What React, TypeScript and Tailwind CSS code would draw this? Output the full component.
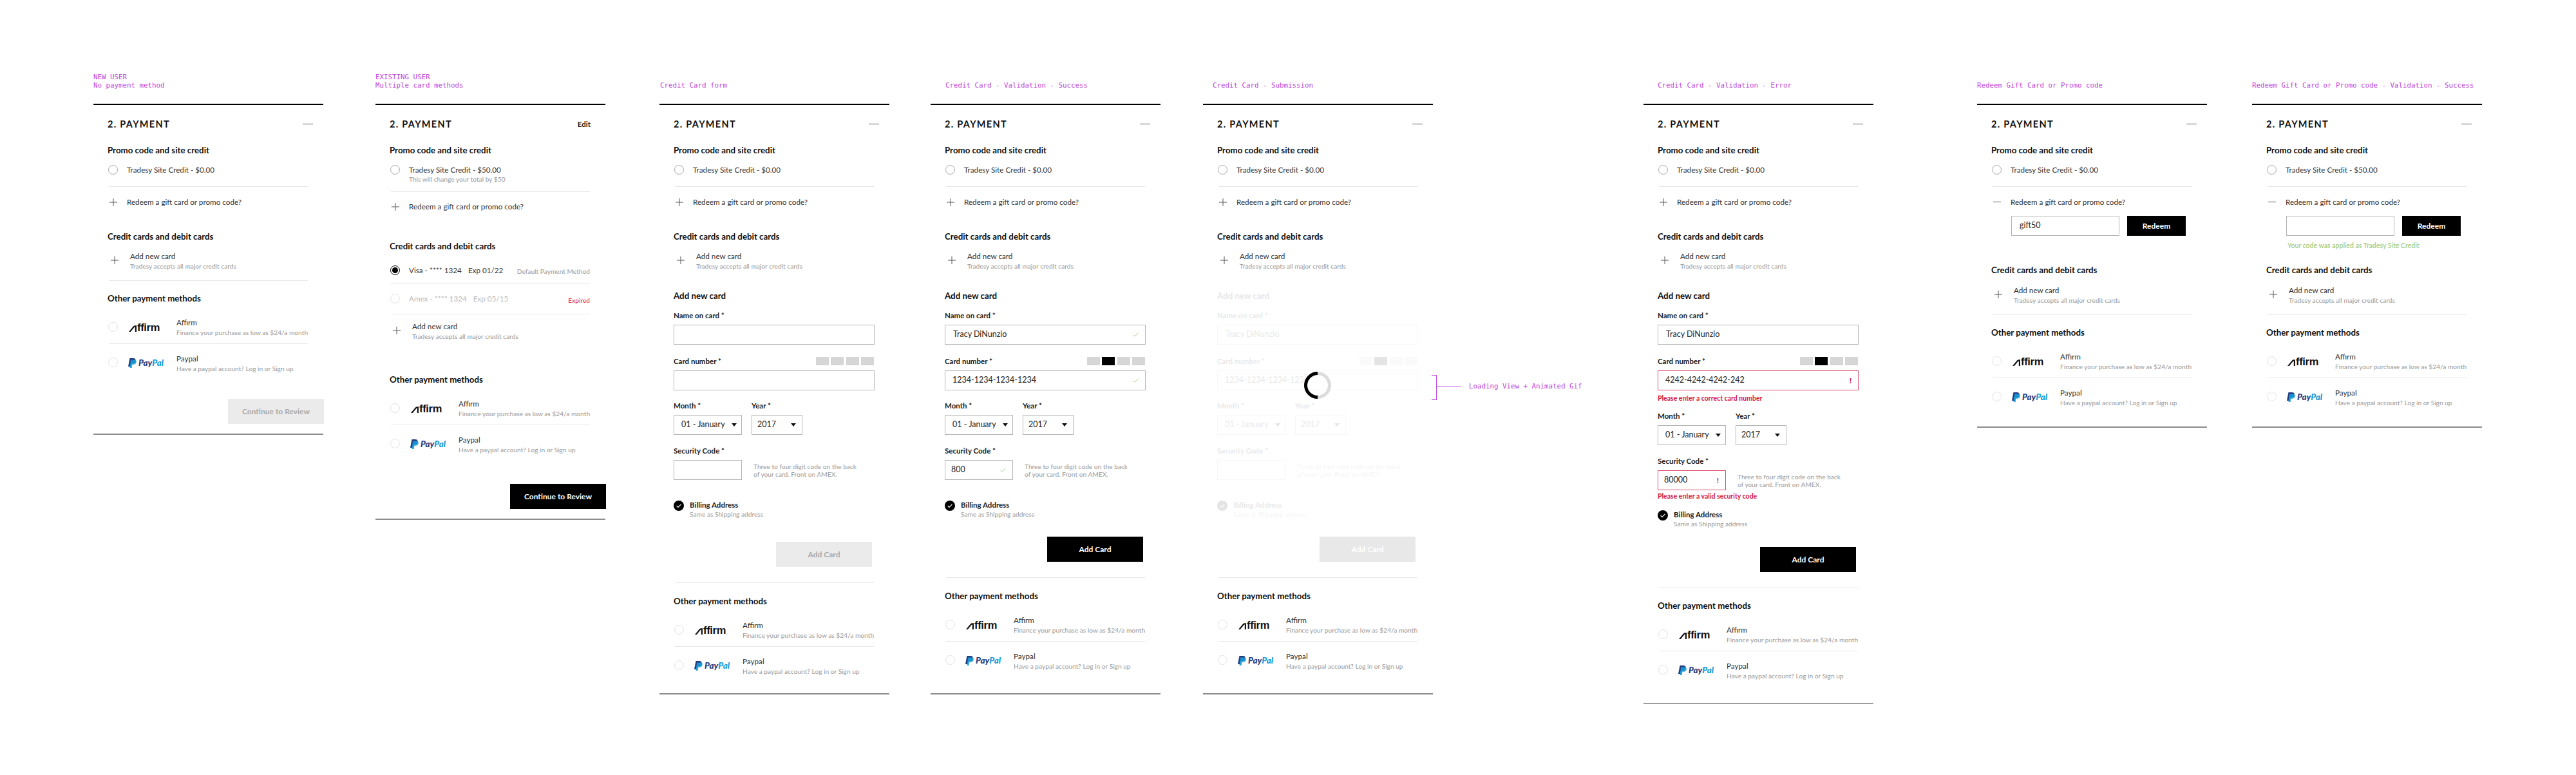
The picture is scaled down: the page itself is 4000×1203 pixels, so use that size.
import React from "react";
import clsx from "clsx";

const Main = ({ children, className }: { children: React.ReactNode; className?: string }) => (
  <div className={clsx("h-[15px] leading-[15px] text-[11.7px] whitespace-nowrap text-[#333]", className)}>{children}</div>
);
const Sub = ({ children, className }: { children: React.ReactNode; className?: string }) => (
  <div className={clsx("h-[14px] leading-[14px] text-[10.2px] whitespace-nowrap text-[#999]", className)}>{children}</div>
);
const H3 = ({ children, className }: { children: React.ReactNode; className?: string }) => (
  <div className={clsx("h-[20px] leading-[20px] text-[13.3px] font-bold whitespace-nowrap text-[#111]", className)}>{children}</div>
);
const Label = ({ children }: { children: React.ReactNode }) => (
  <div className="h-[14px] leading-[14px] mb-[7px] text-[11.5px] font-bold whitespace-nowrap text-[#222]">{children} *</div>
);

const Radio = ({ state = "on", className }: { state?: "on" | "off" | "checked"; className?: string }) =>
  state === "checked" ? (
    <div className={clsx("w-[15px] h-[15px] rounded-full border-[1.5px] border-black flex items-center justify-center shrink-0", className)}>
      <div className="w-[9px] h-[9px] rounded-full bg-black" />
    </div>
  ) : (
    <div
      className={clsx(
        "w-[15px] h-[15px] rounded-full border shrink-0",
        state === "on" ? "border-[#a8a8a8]" : "border-[#e2e2e2]",
        className,
      )}
    />
  );

const Plus = () => (
  <svg width="12" height="12" viewBox="0 0 12 12" className="block">
    <path d="M6 0V12M0 6H12" stroke="#555" strokeWidth="1" fill="none" />
  </svg>
);

const Header = ({ edit }: { edit?: boolean }) => (
  <div className="h-[60px] flex items-center justify-between -mr-[8px]">
    <div className="text-[14.5px] font-bold tracking-[0.09em] text-[#111] whitespace-nowrap">2. PAYMENT</div>
    {edit ? (
      <div className="text-[11.5px] font-bold text-[#222] mr-[7px]">Edit</div>
    ) : (
      <div className="w-[16px] h-px bg-[#555] -mt-[2px]" />
    )}
  </div>
);

const Row = ({ children, className, last }: { children: React.ReactNode; className?: string; last?: boolean }) => (
  <div className={clsx("ml-[2px] w-[309px] flex items-start", !last && "border-b border-[#e8e8e8]", className)}>{children}</div>
);

const Credit = ({ amount, sub, className }: { amount: string; sub?: string; className: string }) => (
  <Row className={className}>
    <Radio className="-ml-px mr-[14px]" />
    <div>
      <Main>Tradesy Site Credit - {amount}</Main>
      {sub && <Sub>{sub}</Sub>}
    </div>
  </Row>
);

const RedeemHead = ({ open }: { open?: boolean }) => (
  <div className="flex items-center h-[15px]">
    <div className="w-[28px] shrink-0 pl-px">
      {open ? <div className="w-[12px] h-px bg-[#555]" /> : <Plus />}
    </div>
    <Main>Redeem a gift card or promo code?</Main>
  </div>
);

const AddCardRow = ({ className, last }: { className: string; last?: boolean }) => (
  <Row className={className} last={last}>
    <div className="w-[33px] shrink-0 pl-[3px] mt-[8px]">
      <Plus />
    </div>
    <div>
      <Main>Add new card</Main>
      <Sub className="mt-px">Tradesy accepts all major credit cards</Sub>
    </div>
  </Row>
);

const AffirmLogo = () => (
  <div className="w-[58px] h-[14px] flex items-end pl-px">
    <svg width="12" height="10" viewBox="0 0 12 10" className="block shrink-0">
      <path d="M0 10 L7 1.6 Q8.4 0.2 10 0.2 L12 0.2 L12 10 L9.8 10 L9.8 2.4 L9 2.4 L2.8 10 Z" fill="#111" />
    </svg>
    <span className="text-[16.5px] leading-[14px] font-bold text-[#111] tracking-[-0.02em] font-['Liberation_Sans',sans-serif] ml-[1px]">
      ffirm
    </span>
  </div>
);

const PaypalLogo = () => (
  <div className="w-[58px] h-[15px] flex items-center">
    <svg width="13" height="15" viewBox="0 0 13 15" className="block shrink-0">
      <path d="M2.5 0H8Q12 0 11.5 3.5Q11 8 6.5 8H4.5L3.6 13H0Z" fill="#253b80" />
      <path d="M4.2 2.5H9.6Q13.4 2.8 12.7 6Q12 9.8 8 9.8H6.4L5.6 15H2.4Z" fill="#179bd7" opacity="0.9" />
    </svg>
    <span className="ml-[3px] text-[13.5px] leading-[15px] font-black italic whitespace-nowrap">
      <span className="text-[#253b80]">Pay</span>
      <span className="text-[#179bd7]">Pal</span>
    </span>
  </div>
);

const Others = ({ className }: { className: string }) => (
  <>
    <H3 className={className}>Other payment methods</H3>
    <Row className="h-[61px]">
      <div className="w-[105px] shrink-0 flex items-start">
        <Radio state="off" className="-ml-px mt-[27px]" />
        <div className="ml-[16px] mt-[28px]">
          <AffirmLogo />
        </div>
      </div>
      <div className="mt-[20px]">
        <Main>Affirm</Main>
        <Sub className="mt-px">Finance your purchase as low as $24/a month</Sub>
      </div>
    </Row>
    <Row className="h-[45px]" last>
      <div className="w-[105px] shrink-0 flex items-start">
        <Radio state="off" className="-ml-px mt-[21px]" />
        <div className="ml-[16px] mt-[22px]">
          <PaypalLogo />
        </div>
      </div>
      <div className="mt-[15px]">
        <Main>Paypal</Main>
        <Sub className="mt-px">Have a paypal account? Log in or Sign up</Sub>
      </div>
    </Row>
  </>
);

const Tick = () => (
  <svg width="9" height="7" viewBox="0 0 9 7" className="block shrink-0">
    <path d="M0.5 3.6L3.2 6L8.5 0.8" stroke="#a5cc7e" strokeWidth="1" fill="none" />
  </svg>
);
const Bang = () => <span className="text-[12px] font-bold text-[#d5173f] leading-none">!</span>;

const Box = ({
  children,
  className,
  status,
}: {
  children?: React.ReactNode;
  className: string;
  status?: "ok" | "err";
}) => (
  <div
    className={clsx(
      "h-[31px] flex items-center justify-between border text-[12.5px] text-[#222] whitespace-nowrap",
      status === "err" ? "border-[#dc4a68]" : "border-[#b5b5b5]",
      className,
    )}
  >
    <span>{children}</span>
    {status === "ok" && <Tick />}
    {status === "err" && <Bang />}
  </div>
);

const Caret = () => (
  <svg width="8" height="5" viewBox="0 0 8 5" className="block shrink-0">
    <path d="M0 0H8L4 5Z" fill="#111" />
  </svg>
);

const Err = ({ children, className }: { children: React.ReactNode; className: string }) => (
  <div className={clsx("h-[13px] leading-[13px] text-[10.5px] font-bold text-[#d5173f] whitespace-nowrap", className)}>{children}</div>
);

const CheckCircle = () => (
  <svg width="16" height="16" viewBox="0 0 16 16" className="block shrink-0">
    <circle cx="8" cy="8" r="8" fill="#000" />
    <path d="M4.6 8.2L7 10.4L11.4 5.8" stroke="#fff" strokeWidth="1.2" fill="none" />
  </svg>
);

const Fields = ({ mode }: { mode: "empty" | "ok" | "err" | "plain" }) => {
  const ok = mode === "ok";
  const err = mode === "err";
  const filled = mode !== "empty";
  return (
    <div>
      <H3>Add new card</H3>
      <div className="mt-[14px]">
        <Label>Name on card</Label>
        <Box className="w-[312px] pl-[12px] pr-[10px]" status={ok ? "ok" : undefined}>
          {filled && "Tracy DiNunzio"}
        </Box>
      </div>
      <div className="mt-[19px]">
        <div className="w-[311px] flex justify-between">
          <Label>Card number</Label>
          <div className="flex gap-[3.5px] h-[13px]">
            <div className="w-[20px] bg-[#d6d6d6]" />
            <div className={clsx("w-[20px]", filled ? "bg-black" : "bg-[#d6d6d6]")} />
            <div className="w-[20px] bg-[#d6d6d6]" />
            <div className="w-[20px] bg-[#d6d6d6]" />
          </div>
        </div>
        <Box className="w-[312px] pl-[11px] pr-[10px]" status={ok ? "ok" : err ? "err" : undefined}>
          {filled && (err ? "4242-4242-4242-242" : "1234-1234-1234-1234")}
        </Box>
      </div>
      {err && <Err className="mt-[6px]">Please enter a correct card number</Err>}
      <div className={clsx("flex gap-[15px]", err ? "mt-[14px]" : "mt-[17px]")}>
        <div>
          <Label>Month</Label>
          <Box className="w-[106px] pl-[11px] pr-[8px]">
            01 - January
            <span />
          </Box>
          <div className="h-0 relative">
            <div className="absolute right-[8px] -top-[18px]">
              <Caret />
            </div>
          </div>
        </div>
        <div>
          <Label>Year</Label>
          <Box className="w-[79px] pl-[8px] pr-[10px]">2017</Box>
          <div className="h-0 relative">
            <div className="absolute right-[10px] -top-[18px]">
              <Caret />
            </div>
          </div>
        </div>
      </div>
      <div className="mt-[18px]">
        <Label>Security Code</Label>
        <div className="flex items-center">
          <Box className="w-[106px] pl-[9px] pr-[10px]" status={ok ? "ok" : err ? "err" : undefined}>
            {ok ? "800" : err ? "80000" : ""}
          </Box>
          <div className="ml-[18px] text-[10.2px] leading-[12px] text-[#999] whitespace-nowrap">
            Three to four digit code on the back
            <br />
            of your card. Front on AMEX.
          </div>
        </div>
      </div>
      {err && <Err className="mt-[3px]">Please enter a valid security code</Err>}
      <div className={clsx("flex items-start", err ? "mt-[15px]" : "mt-[32px]")}>
        <CheckCircle />
        <div className="ml-[9px]">
          <div className="h-[14px] leading-[14px] text-[11.5px] font-bold text-[#222] whitespace-nowrap">Billing Address</div>
          <Sub>Same as Shipping address</Sub>
        </div>
      </div>
    </div>
  );
};

const Btn = ({ children, kind, className }: { children: React.ReactNode; kind: "on" | "off" | "fade"; className?: string }) => (
  <div
    className={clsx(
      "w-[149px] h-[39px] flex items-center justify-center text-[12px] font-bold whitespace-nowrap",
      kind === "on" && "bg-black text-white",
      kind === "off" && "bg-[#ecebec] text-[#a8a8a8]",
      kind === "fade" && "bg-[#e8e8e8] text-white",
      className,
    )}
  >
    {children}
  </div>
);

const Divider = ({ className }: { className: string }) => (
  <div className={clsx("ml-[2px] w-[309px] border-t border-[#e8e8e8]", className)} />
);

const Panel = ({
  lines,
  className,
  captionClass,
  children,
  overlay,
  bottom = "border-t-2 border-[#8c8c8c]",
}: {
  lines: string[];
  className: string;
  captionClass?: string;
  children: React.ReactNode;
  overlay?: React.ReactNode;
  bottom?: string;
}) => (
  <section className={clsx("relative w-[357px] shrink-0", className)}>
    <div
      className={clsx(
        "h-[161px] flex flex-col justify-end pb-[22px] font-['DejaVu_Sans_Mono',monospace] text-[10.8px] leading-[13px] text-[#c045da] whitespace-pre",
        captionClass,
      )}
    >
      {lines.map((l) => (
        <div key={l}>{l}</div>
      ))}
    </div>
    <div className="border-t-2 border-black pl-[22px] pr-[24px]">{children}</div>
    <div className={bottom} />
    {overlay}
  </section>
);

const Promo = ({ amount = "$0.00" }: { amount?: string }) => (
  <>
    <Header />
    <H3>Promo code and site credit</H3>
    <Credit amount={amount} className="h-[47px] pt-[13px]" />
  </>
);

const Redeem = ({ value, success }: { value?: string; success?: boolean }) => (
  <div className="h-[119px] pt-[16px] ml-[2px]">
    <RedeemHead open />
    <div className="flex gap-[12px] mt-[14px] ml-[29px]">
      <div className="w-[168px] h-[31px] border border-[#b5b5b5] flex items-center pl-[12px] text-[12.5px] text-[#222]">{value}</div>
      <div className="w-[91px] h-[31px] bg-black text-white text-[12px] font-bold flex items-center justify-center">Redeem</div>
    </div>
    {success && (
      <div className="mt-[9px] ml-[31px] h-[13px] leading-[13px] text-[10.5px] font-semibold text-[#a5cc7e] whitespace-nowrap">
        Your code was applied as Tradesy Site Credit
      </div>
    )}
  </div>
);

const PlainRedeem = () => (
  <div className="h-[67px] pt-[16px] ml-[2px]">
    <RedeemHead />
  </div>
);

export default function App() {
  return (
    <div className="w-[4000px] h-[1203px] overflow-hidden bg-white flex items-start font-['Lato',sans-serif]">
      <Panel lines={["NEW USER", "No payment method"]} className="ml-[145px]">
        <Promo />
        <PlainRedeem />
        <H3>Credit cards and debit cards</H3>
        <AddCardRow className="h-[59px] pt-[13px]" />
        <Others className="mt-[17px]" />
        <Btn kind="off" className="ml-[187px] mt-[40px] mb-[15px]">
          Continue to Review
        </Btn>
      </Panel>

      <Panel lines={["EXISTING USER", "Multiple card methods"]} className="ml-[81px]">
        <Header edit />
        <H3>Promo code and site credit</H3>
        <Credit amount="$50.00" sub="This will change your total by $50" className="h-[55px] pt-[13px]" />
        <div className="h-[74px] pt-[15px] ml-[2px]">
          <RedeemHead />
        </div>
        <H3>Credit cards and debit cards</H3>
        <Row className="h-[49px] pt-[20px]">
          <Radio state="checked" className="-ml-px mr-[14px]" />
          <Main>
            Visa - **** 1324<span className="ml-[10px]">Exp 01/22</span>
          </Main>
          <Sub className="ml-auto mt-[2px]">Default Payment Method</Sub>
        </Row>
        <Row className="h-[47px] pt-[15px]">
          <Radio state="off" className="-ml-px mr-[14px]" />
          <Main className="text-[#b8b8b8]">
            Amex - **** 1324<span className="ml-[10px]">Exp 05/15</span>
          </Main>
          <Sub className="ml-auto mt-[3px] text-[#d5173f]">Expired</Sub>
        </Row>
        <AddCardRow className="h-[91px] pt-[11px]" last />
        <Others className="" />
        <Btn kind="on" className="ml-[187px] mt-[46px] mb-[15px]">
          Continue to Review
        </Btn>
      </Panel>

      <Panel lines={["Credit Card form"]} className="ml-[84px]" captionClass="pl-px">
        <Promo />
        <PlainRedeem />
        <H3>Credit cards and debit cards</H3>
        <AddCardRow className="h-[72px] pt-[13px]" last />
        <Fields mode="empty" />
        <Btn kind="off" className="ml-[159px] mt-[36px]">
          Add Card
        </Btn>
        <Divider className="mt-[24px]" />
        <Others className="mt-[18px]" />
        <div className="h-[27px]" />
      </Panel>

      <Panel lines={["Credit Card - Validation - Success"]} className="ml-[64px]" captionClass="pl-[23px]">
        <Promo />
        <PlainRedeem />
        <H3>Credit cards and debit cards</H3>
        <AddCardRow className="h-[72px] pt-[13px]" last />
        <Fields mode="ok" />
        <Btn kind="on" className="ml-[159px] mt-[28px]">
          Add Card
        </Btn>
        <Divider className="mt-[24px]" />
        <Others className="mt-[18px]" />
        <div className="h-[35px]" />
      </Panel>

      <Panel
        lines={["Credit Card - Submission"]}
        className="ml-[66px]"
        captionClass="pl-[15px]"
        overlay={
          <>
            <svg width="42" height="42" viewBox="0 0 42 42" className="absolute left-[157px] top-[577px]">
              <circle cx="21" cy="21" r="18.5" stroke="#dcdcdc" strokeWidth="5" fill="none" />
              <path d="M21 2.5A18.5 18.5 0 0 0 21 39.5" stroke="#000" strokeWidth="5" fill="none" />
            </svg>
            <div className="absolute left-[355px] top-[582px] w-[8px] h-[39px] border-y border-r border-[#c045da]" />
            <div className="absolute left-[362px] top-[600px] w-[39px] h-px bg-[#c045da]" />
            <div className="absolute left-[413px] top-[593px] font-['DejaVu_Sans_Mono',monospace] text-[10.8px] leading-[13px] text-[#c045da] whitespace-pre">
              Loading View + Animated Gif
            </div>
          </>
        }
      >
        <Promo />
        <PlainRedeem />
        <H3>Credit cards and debit cards</H3>
        <AddCardRow className="h-[72px] pt-[13px]" last />
        <div className="opacity-10">
          <Fields mode="plain" />
        </div>
        <Btn kind="fade" className="ml-[159px] mt-[28px]">
          Add Card
        </Btn>
        <Divider className="mt-[24px]" />
        <Others className="mt-[18px]" />
        <div className="h-[35px]" />
      </Panel>

      <Panel lines={["Credit Card - Validation - Error"]} className="ml-[327px]" captionClass="pl-[22px]" bottom="border-t border-[#333]">
        <Promo />
        <PlainRedeem />
        <H3>Credit cards and debit cards</H3>
        <AddCardRow className="h-[72px] pt-[13px]" last />
        <Fields mode="err" />
        <Btn kind="on" className="ml-[159px] mt-[29px]">
          Add Card
        </Btn>
        <Divider className="mt-[24px]" />
        <Others className="mt-[17px]" />
        <div className="h-[35px]" />
      </Panel>

      <Panel lines={["Redeem Gift Card or Promo code"]} className="ml-[161px]">
        <Promo />
        <Redeem value="gift50" />
        <H3>Credit cards and debit cards</H3>
        <AddCardRow className="h-[60px] pt-[14px]" />
        <Others className="mt-[17px]" />
        <div className="h-[30px]" />
      </Panel>

      <Panel lines={["Redeem Gift Card or Promo code - Validation - Success"]} className="ml-[70px]">
        <Promo amount="$50.00" />
        <Redeem success />
        <H3>Credit cards and debit cards</H3>
        <AddCardRow className="h-[60px] pt-[14px]" />
        <Others className="mt-[17px]" />
        <div className="h-[30px]" />
      </Panel>
    </div>
  );
}
